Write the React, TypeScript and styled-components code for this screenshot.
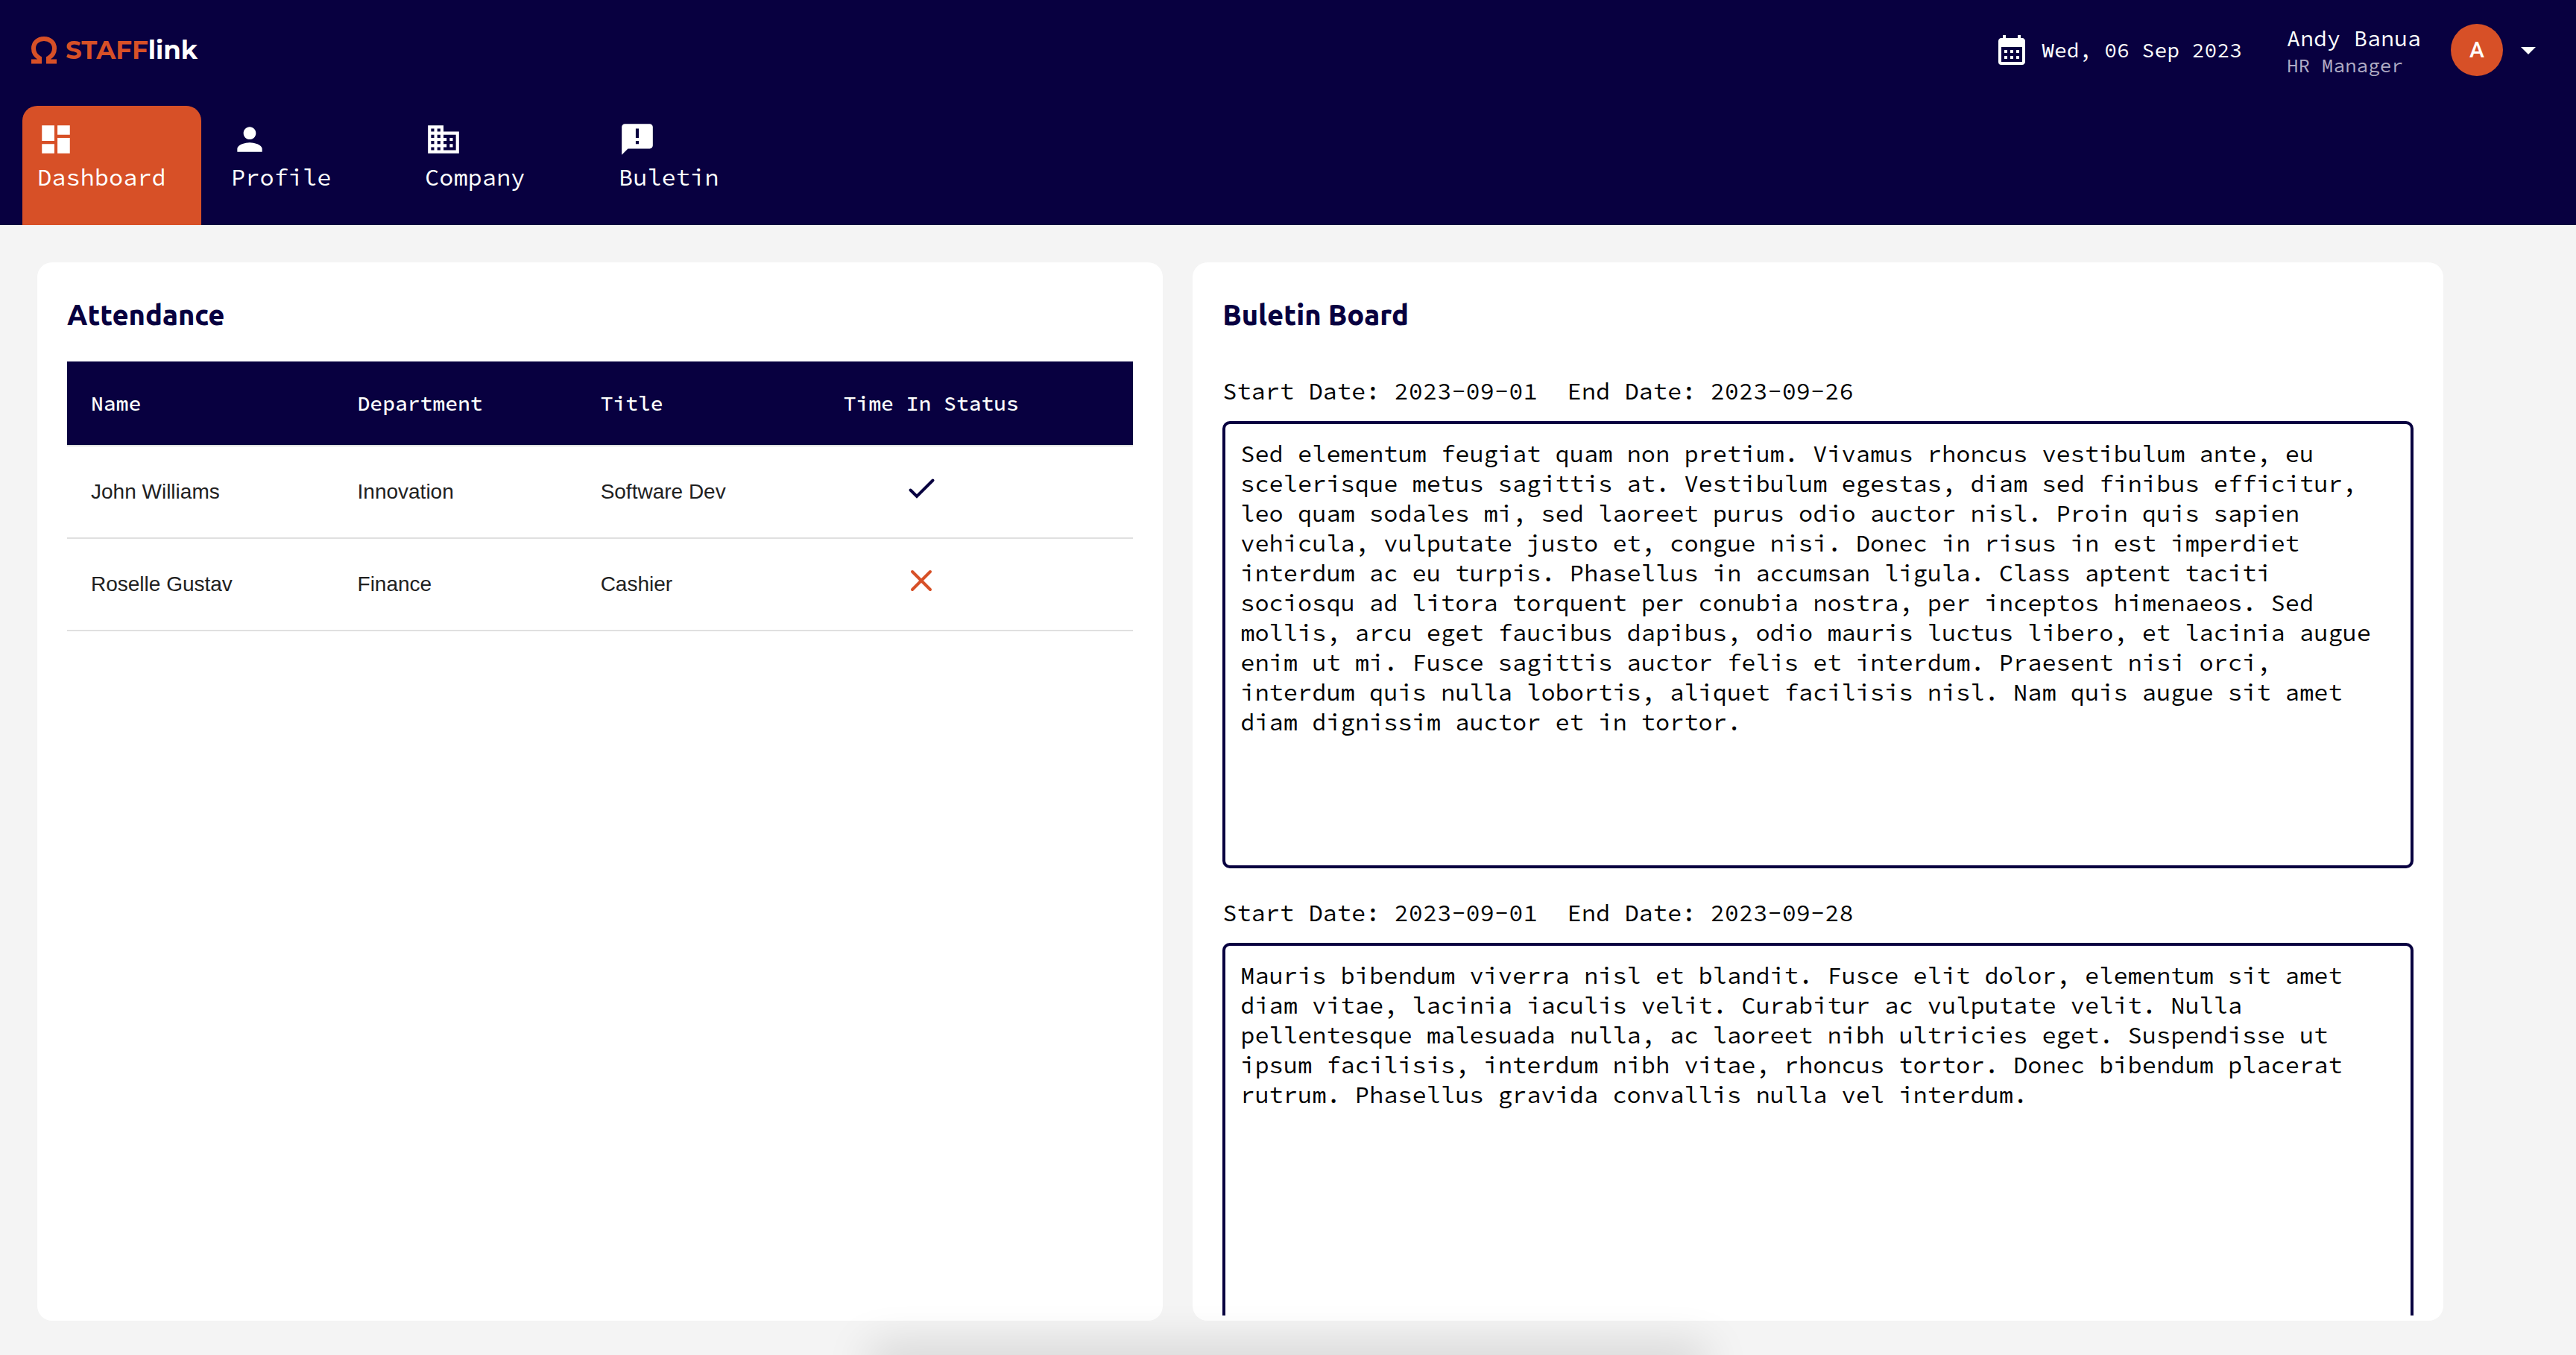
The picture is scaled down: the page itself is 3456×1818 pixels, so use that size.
import React, { useId } from "react";
import styled, { createGlobalStyle } from "styled-components";
import {
  MdAnnouncement,
  MdArrowDropDown,
  MdBusiness,
  MdCalendarMonth,
  MdDashboard,
  MdPerson,
} from "react-icons/md";

const navy = "#080040";
const orange = "#d75027";
const mono = `"Source Code Pro", "Liberation Mono", monospace`;
const heading = `Ubuntu, "Noto Sans", sans-serif`;

const GlobalStyle = createGlobalStyle`
  *, *::before, *::after { box-sizing: border-box; }
  body {
    margin: 0;
    background: #f4f4f4;
    color: #000;
    font-family: ${mono};
    font-size: 32px;
    line-height: 40px;
  }
`;

const Page = styled.div`
  display: flex;
  flex-direction: column;
  height: 100vh;
  overflow: hidden;
`;

const Header = styled.header`
  background: ${navy};
  color: #fff;
`;

const TopBar = styled.div`
  display: flex;
  align-items: center;
  justify-content: space-between;
  height: 134px;
  padding: 0 40px;
`;

const Brand = styled.a`
  display: flex;
  align-items: center;
  gap: 10px;
  color: #fff;
  font-family: Montserrat, Inter, sans-serif;
  font-size: 34px;
  font-weight: 700;
  text-decoration: none;
`;

const BrandAccent = styled.span`
  color: ${orange};
`;

const Account = styled.div`
  display: flex;
  align-items: center;
`;

const Today = styled.div`
  display: flex;
  align-items: center;
  gap: 16px;
  margin-right: 60px;
  font-size: 28px;
`;

const Person = styled.div`
  display: flex;
  flex-direction: column;
  margin-right: 40px;
  padding-top: 4px;
`;

const PersonName = styled.span`
  font-size: 30px;
  line-height: 38px;
`;

const PersonRole = styled.span`
  color: #b0acc4;
  font-size: 26px;
  line-height: 36px;
`;

const MenuButton = styled.button`
  display: flex;
  align-items: center;
  gap: 10px;
  padding: 0;
  border: 0;
  background: none;
  color: #fff;
  cursor: pointer;
`;

const Avatar = styled.span`
  display: grid;
  place-items: center;
  width: 70px;
  height: 70px;
  border-radius: 50%;
  background: ${orange};
  font: 500 30px/40px Roboto, sans-serif;
`;

const Tabs = styled.nav`
  display: flex;
  gap: 20px;
  padding: 8px 30px 0;
`;

const Tab = styled.a<{ $active?: boolean }>`
  display: flex;
  flex-direction: column;
  gap: 6px;
  width: 240px;
  height: 160px;
  padding: 20px;
  border-radius: 20px 20px 0 0;
  background: ${({ $active }) => ($active ? orange : "transparent")};
  color: #fff;
  text-decoration: none;
`;

const Main = styled.main`
  display: flex;
  flex: 1;
  gap: 40px;
  min-height: 0;
  padding: 50px 50px 46px;
`;

const Card = styled.section<{ $width: string }>`
  display: flex;
  flex: none;
  flex-direction: column;
  width: ${({ $width }) => $width};
  padding: 40px 40px 7px;
  border-radius: 20px;
  background: #fff;
`;

const CardTitle = styled.h2`
  margin: 0;
  color: ${navy};
  font-family: ${heading};
  font-size: 38px;
  font-weight: 800;
  line-height: 60px;
`;

const Table = styled.table`
  width: 100%;
  margin-top: 33px;
  border-collapse: separate;
  border-spacing: 0;
  table-layout: fixed;
  color: #212121;
  font-family: Helvetica, "Liberation Sans", Arial, sans-serif;
  font-size: 28px;
  text-align: left;
`;

const Column = styled.col<{ $width?: string }>`
  width: ${({ $width }) => $width ?? "auto"};
`;

const HeadCell = styled.th`
  height: 114px;
  padding: 0 32px;
  border-bottom: 2px solid #e0e0e0;
  background: ${navy};
  background-clip: padding-box;
  color: #fff;
  font-family: ${mono};
  font-weight: 500;
`;

const Cell = styled.td`
  padding: 32px;
  border-bottom: 2px solid #e0e0e0;
`;

const Status = styled.span<{ $present: boolean }>`
  display: block;
  height: 58px;
  padding-left: 80px;
  color: ${({ $present }) => ($present ? navy : orange)};
`;

const Mark = styled.svg`
  display: block;
  width: 48px;
  height: 48px;
  fill: none;
  stroke: currentColor;
  stroke-width: 4px;
  stroke-linecap: round;
`;

const Posts = styled.div`
  display: flex;
  flex: 1;
  flex-direction: column;
  gap: 40px;
  min-height: 0;
  padding-top: 53px;
  overflow: hidden;
`;

const Post = styled.article`
  display: flex;
  flex: none;
  flex-direction: column;
  gap: 20px;
`;

const Dates = styled.label`
  display: flex;
  gap: 40px;
`;

const Message = styled.textarea`
  display: block;
  width: 100%;
  height: 600px;
  padding: 20px;
  border: 4px solid ${navy};
  border-radius: 10px;
  background: #fff;
  color: #000;
  font: inherit;
  resize: none;
  overflow: hidden;
`;

const DockShadow = styled.div`
  position: fixed;
  bottom: -20px;
  left: 34%;
  right: 34%;
  height: 20px;
  box-shadow: 0 0 60px 8px rgba(0, 0, 0, 0.18);
  pointer-events: none;
`;

const tabs = [
  { label: "Dashboard", Icon: MdDashboard, active: true },
  { label: "Profile", Icon: MdPerson },
  { label: "Company", Icon: MdBusiness },
  { label: "Buletin", Icon: MdAnnouncement },
];

const attendance = [
  { name: "John Williams", department: "Innovation", title: "Software Dev", present: true },
  { name: "Roselle Gustav", department: "Finance", title: "Cashier", present: false },
];

const posts = [
  {
    start: "2023-09-01",
    end: "2023-09-26",
    text: "Sed elementum feugiat quam non pretium. Vivamus rhoncus vestibulum ante, eu scelerisque metus sagittis at. Vestibulum egestas, diam sed finibus efficitur, leo quam sodales mi, sed laoreet purus odio auctor nisl. Proin quis sapien vehicula, vulputate justo et, congue nisi. Donec in risus in est imperdiet interdum ac eu turpis. Phasellus in accumsan ligula. Class aptent taciti sociosqu ad litora torquent per conubia nostra, per inceptos himenaeos. Sed mollis, arcu eget faucibus dapibus, odio mauris luctus libero, et lacinia augue enim ut mi. Fusce sagittis auctor felis et interdum. Praesent nisi orci, interdum quis nulla lobortis, aliquet facilisis nisl. Nam quis augue sit amet diam dignissim auctor et in tortor.",
  },
  {
    start: "2023-09-01",
    end: "2023-09-28",
    text: "Mauris bibendum viverra nisl et blandit. Fusce elit dolor, elementum sit amet diam vitae, lacinia iaculis velit. Curabitur ac vulputate velit. Nulla pellentesque malesuada nulla, ac laoreet nibh ultricies eget. Suspendisse ut ipsum facilisis, interdum nibh vitae, rhoncus tortor. Donec bibendum placerat rutrum. Phasellus gravida convallis nulla vel interdum.",
  },
];

function OmegaLogo() {
  return (
    <svg width="38" height="38" viewBox="0 0 38 38" fill="none" stroke={orange} strokeWidth="6" aria-hidden="true">
      <path d="M2 34.5H13V30C8 27 5 22.5 5 17C5 9 11 4 19 4C27 4 33 9 33 17C33 22.5 30 27 25 30V34.5H36" />
    </svg>
  );
}

function StatusMark({ present }: { present: boolean }) {
  return (
    <Status $present={present}>
      <Mark viewBox="0 0 48 48" role="img" aria-label={present ? "Timed in" : "Not timed in"}>
        <path d={present ? "M9.5 26.5L18 35L39.5 13.5" : "M12 12L36 36M36 12L12 36"} />
      </Mark>
    </Status>
  );
}

function BulletinPost({ start, end, text }: { start: string; end: string; text: string }) {
  const id = useId();
  return (
    <Post>
      <Dates htmlFor={id}>
        <span>Start Date: {start}</span>
        <span>End Date: {end}</span>
      </Dates>
      <Message id={id} readOnly spellCheck={false} defaultValue={text} />
    </Post>
  );
}

export default function App() {
  return (
    <Page>
      <GlobalStyle />
      <Header>
        <TopBar>
          <Brand href="#">
            <OmegaLogo />
            <span>
              <BrandAccent>STAFF</BrandAccent>link
            </span>
          </Brand>
          <Account>
            <Today>
              <MdCalendarMonth size={48} />
              <span>Wed, 06 Sep 2023</span>
            </Today>
            <Person>
              <PersonName>Andy Banua</PersonName>
              <PersonRole>HR Manager</PersonRole>
            </Person>
            <MenuButton type="button" aria-label="Account menu">
              <Avatar>A</Avatar>
              <MdArrowDropDown size={48} />
            </MenuButton>
          </Account>
        </TopBar>
        <Tabs>
          {tabs.map(({ label, Icon, active }) => (
            <Tab key={label} href="#" $active={active}>
              <Icon size={50} />
              {label}
            </Tab>
          ))}
        </Tabs>
      </Header>
      <Main>
        <Card $width="45%">
          <CardTitle>Attendance</CardTitle>
          <Table>
            <colgroup>
              <Column $width="25%" />
              <Column $width="22.8%" />
              <Column $width="22.8%" />
              <Column />
            </colgroup>
            <thead>
              <tr>
                <HeadCell>Name</HeadCell>
                <HeadCell>Department</HeadCell>
                <HeadCell>Title</HeadCell>
                <HeadCell>Time In Status</HeadCell>
              </tr>
            </thead>
            <tbody>
              {attendance.map((row) => (
                <tr key={row.name}>
                  <Cell>{row.name}</Cell>
                  <Cell>{row.department}</Cell>
                  <Cell>{row.title}</Cell>
                  <Cell>
                    <StatusMark present={row.present} />
                  </Cell>
                </tr>
              ))}
            </tbody>
          </Table>
        </Card>
        <Card $width="50%">
          <CardTitle>Buletin Board</CardTitle>
          <Posts>
            {posts.map((post) => (
              <BulletinPost key={post.end} {...post} />
            ))}
          </Posts>
        </Card>
      </Main>
      <DockShadow />
    </Page>
  );
}
